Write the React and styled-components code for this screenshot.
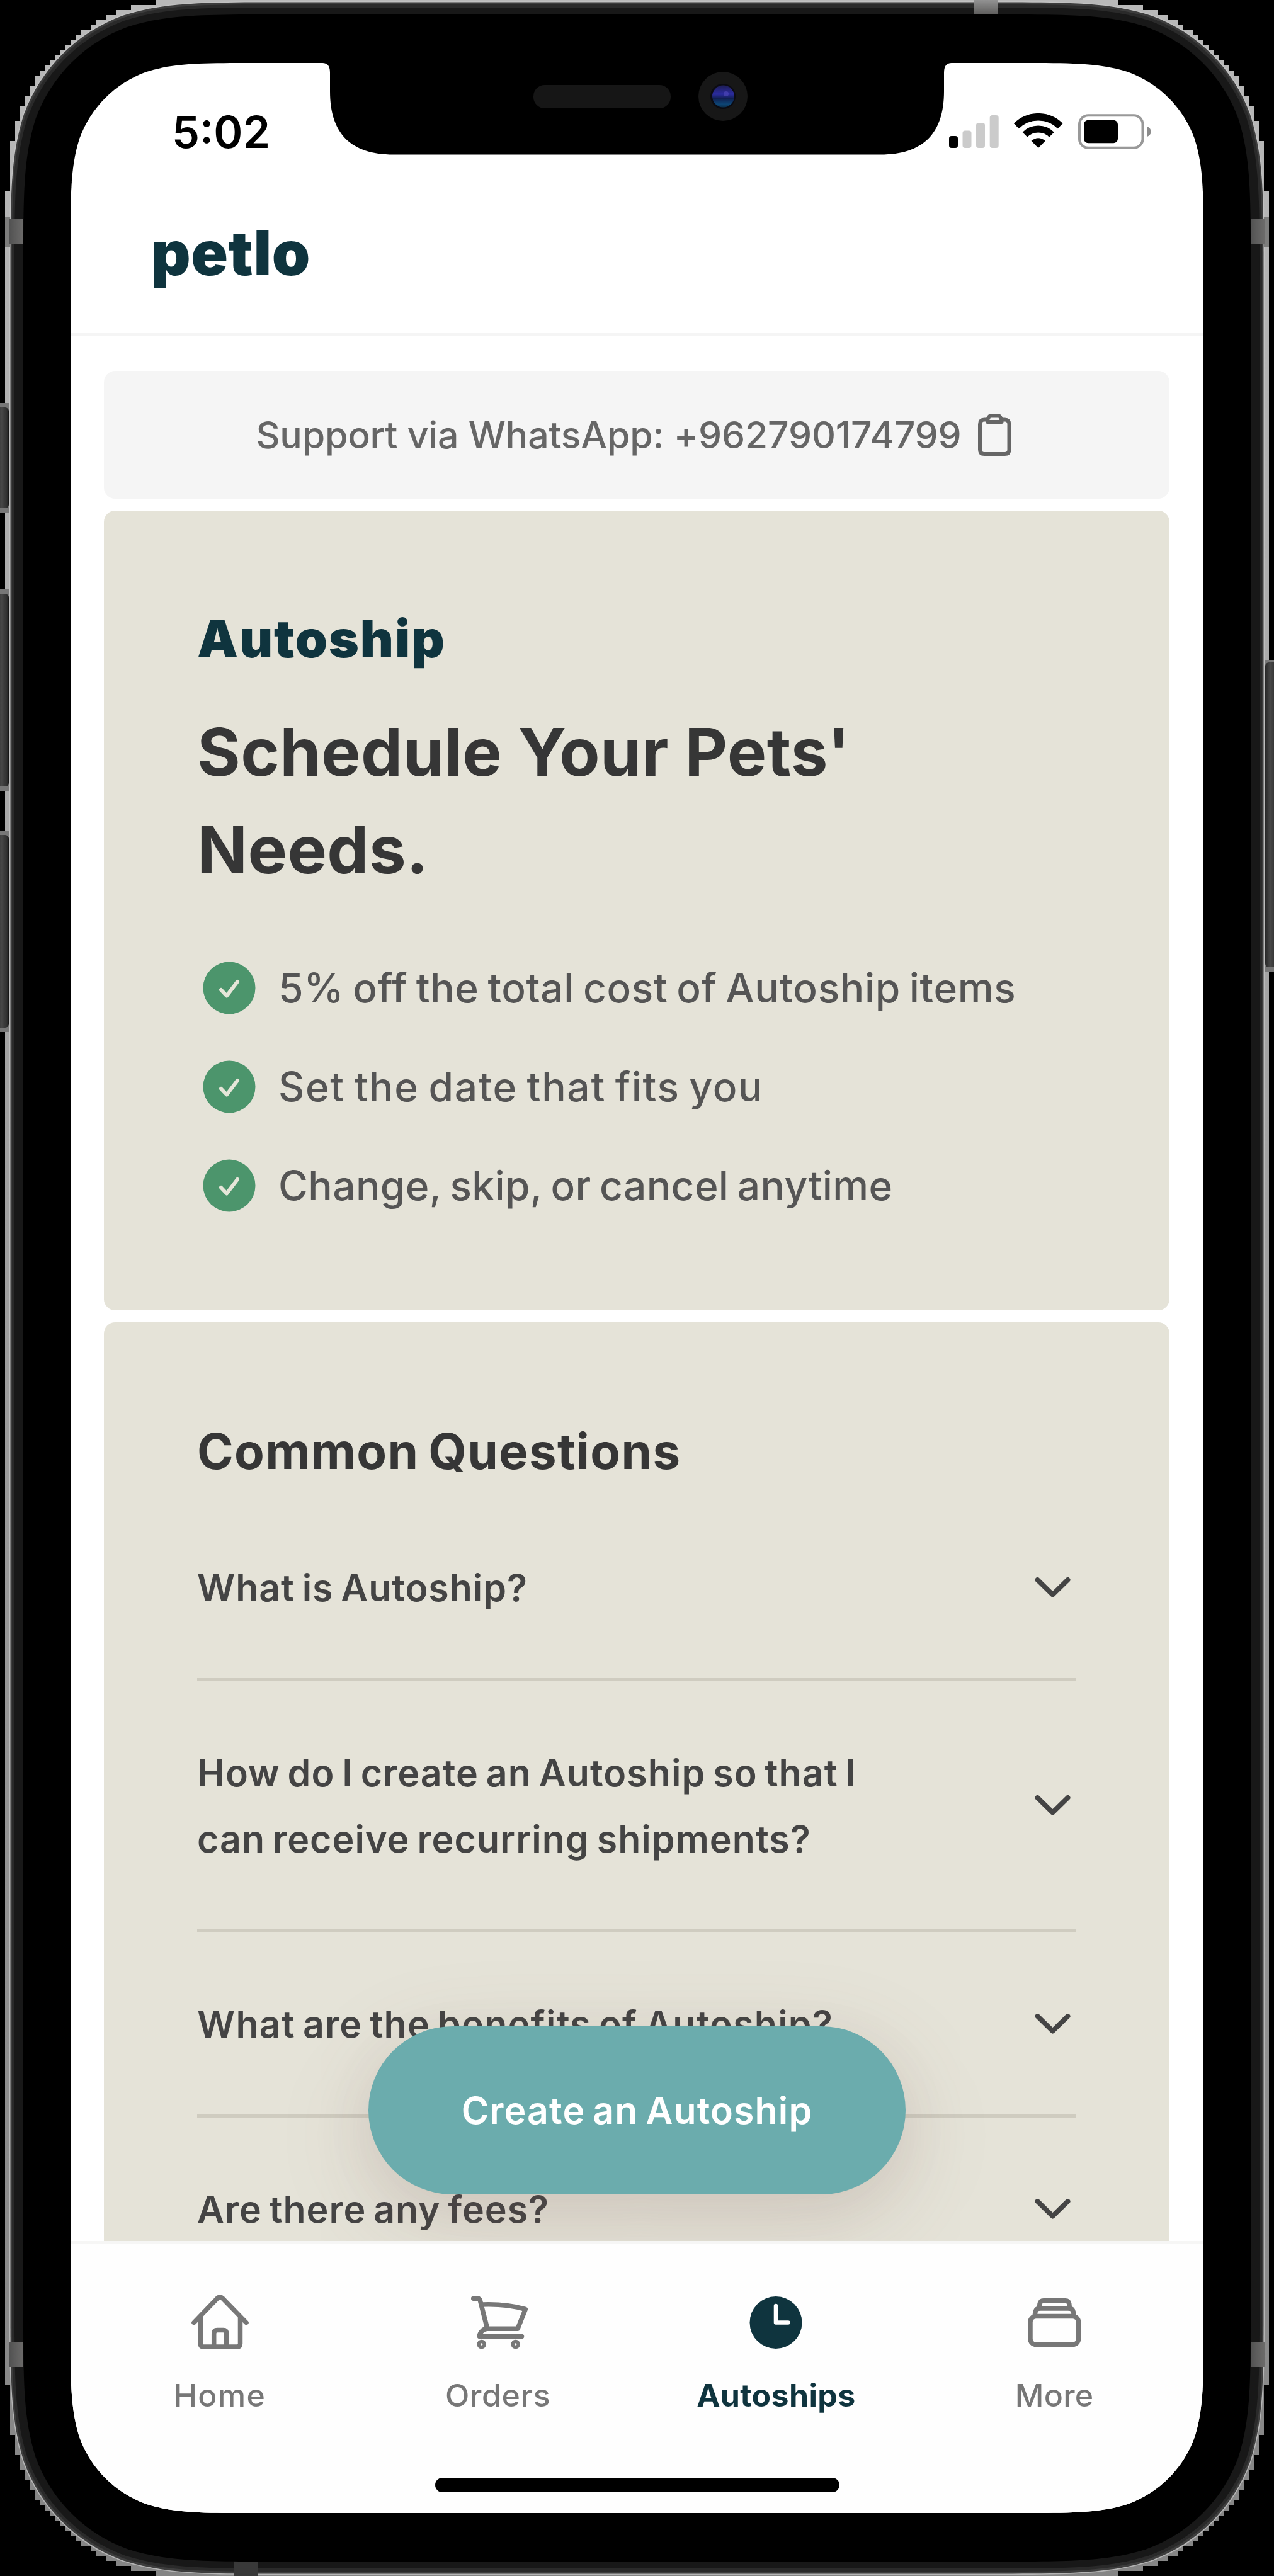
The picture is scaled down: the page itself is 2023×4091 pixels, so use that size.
import React from 'react';
import styled, { createGlobalStyle } from 'styled-components';

const GlobalStyle = createGlobalStyle`
  * { box-sizing: border-box; }
  html, body { margin: 0; padding: 0; background: #000; }
  body { font-family: Inter, "Liberation Sans", sans-serif; -webkit-font-smoothing: antialiased; }
  h1, h2, p, ul { margin: 0; padding: 0; }
  ul { list-style: none; }
  button { font-family: inherit; border: 0; cursor: pointer; }
`;

/* Continuous-curvature rounded rectangle, clockwise from the top edge. */
function squircle(x, y, w, h, r) {
  const a = 1.528665 * r, b = 1.08849 * r, c = 0.86841 * r;
  const d = 0.631494 * r, e = 0.074911 * r, f = 0.372824 * r, g = 0.16906 * r;
  const R = x + w, B = y + h;
  return [
    `M${x + a} ${y}H${R - a}`,
    `C${R - b} ${y} ${R - c} ${y} ${R - d} ${y + e}`,
    `C${R - f} ${y + g} ${R - g} ${y + f} ${R - e} ${y + d}`,
    `C${R} ${y + c} ${R} ${y + b} ${R} ${y + a}`,
    `V${B - a}`,
    `C${R} ${B - b} ${R} ${B - c} ${R - e} ${B - d}`,
    `C${R - g} ${B - f} ${R - f} ${B - g} ${R - d} ${B - e}`,
    `C${R - c} ${B} ${R - b} ${B} ${R - a} ${B}`,
    `H${x + a}`,
    `C${x + b} ${B} ${x + c} ${B} ${x + d} ${B - e}`,
    `C${x + f} ${B - g} ${x + g} ${B - f} ${x + e} ${B - d}`,
    `C${x} ${B - c} ${x} ${B - b} ${x} ${B - a}`,
    `V${y + a}`,
    `C${x} ${y + b} ${x} ${y + c} ${x + e} ${y + d}`,
    `C${x + g} ${y + f} ${x + f} ${y + g} ${x + d} ${y + e}`,
    `C${x + c} ${y} ${x + b} ${y} ${x + a} ${y}Z`,
  ].join('');
}

const W = 2023;
const H = 4091;

/* Stepped outline of the metal rim: corner points from the side to the top. */
const steps = [
  [8, 304], [16, 224], [24, 192], [32, 168], [40, 152], [48, 136], [56, 120], [64, 112],
  [72, 104], [80, 96], [88, 88], [96, 80], [104, 72], [112, 64], [120, 56], [128, 48],
  [144, 40], [152, 32], [168, 24], [184, 16], [208, 8], [248, 0],
];
const corner = steps.flatMap(([x, y], i) => (i ? [[x, steps[i - 1][1]], [x, y]] : [[x, y]]));
const rim = [
  ...corner,
  ...[...corner].reverse().map(([x, y]) => [W - x, y]),
  ...corner.map(([x, y]) => [W - x, H - y]),
  ...[...corner].reverse().map(([x, y]) => [x, H - y]),
].map((p) => p.join(',')).join(' ');

const Stage = styled.div`
  position: relative;
  width: ${W}px;
  height: ${H}px;
  padding: 100px 112px;
  background: #000;
  overflow: hidden;
`;

const Art = styled.svg`
  position: absolute;
  top: 0;
  left: 0;
  pointer-events: none;
`;

const Screen = styled.div`
  position: relative;
  width: 1799px;
  height: 3891px;
  display: flex;
  flex-direction: column;
  background: #fff;
  clip-path: path('${squircle(0, 0, 1799, 3891, 190)}');
`;

const StatusBar = styled.div`
  flex: none;
  height: 173px;
  padding: 80px 83px 0 161px;
  display: flex;
  align-items: flex-start;
  justify-content: space-between;
`;

const Clock = styled.span`
  font-size: 70px;
  font-weight: 600;
  line-height: 60px;
  color: #000;
`;

const Header = styled.header`
  flex: none;
  height: 261px;
  padding-left: 128px;
  display: flex;
  align-items: center;
  border-bottom: 5px solid #f5f5f5;
`;

const Brand = styled.span`
  font-size: 97px;
  font-weight: 900;
  line-height: 97px;
  letter-spacing: 0.6px;
  color: #0f343e;
`;

const Main = styled.main`
  position: relative;
  flex: none;
  height: 3025px;
  padding: 55px 54px 0 53px;
  display: flex;
  flex-direction: column;
  gap: 19px;
  overflow: hidden;
`;

const Support = styled.div`
  flex: none;
  height: 203px;
  padding-right: 10px;
  display: flex;
  align-items: center;
  justify-content: center;
  gap: 26px;
  border-radius: 18px;
  background: #f5f5f5;
  color: #666;
  font-size: 59px;
  font-weight: 500;
  letter-spacing: -0.2px;
`;

const Card = styled.section`
  flex: none;
  border-radius: 18px;
  background: #e5e3d8;
  padding: ${(p) => p.$pad};
  height: ${(p) => p.$height || 'auto'};
`;

const Logo = styled.p`
  font-size: 82px;
  font-weight: 900;
  line-height: 90px;
  letter-spacing: 1.8px;
  color: #0f343e;
`;

const Title = styled.h1`
  margin-top: 56px;
  font-size: 105px;
  font-weight: 700;
  line-height: 155px;
  letter-spacing: 0.4px;
  color: #363636;
  max-width: 1200px;
`;

const Perks = styled.ul`
  margin-top: 64px;
  padding-left: 9px;
`;

const Perk = styled.li`
  height: 157px;
  display: flex;
  align-items: center;
  gap: 36px;
  font-size: 64px;
  font-weight: 500;
  letter-spacing: ${(p) => p.$track}px;
  word-spacing: -4px;
  color: #555;
`;

const Subtitle = styled.h2`
  margin-bottom: 16px;
  font-size: 78px;
  font-weight: 700;
  line-height: 110px;
  letter-spacing: 1.35px;
  word-spacing: -5px;
  color: #363636;
`;

const Question = styled.div`
  display: flex;
  align-items: center;
  justify-content: space-between;
  padding: 93px 9px 91px 0;
  border-bottom: 5px solid #cfccc0;
`;

const QuestionText = styled.p`
  max-width: 1100px;
  font-size: 59px;
  font-weight: 600;
  line-height: 105px;
  letter-spacing: ${(p) => p.$track}px;
  word-spacing: -4px;
  color: #444;
`;

const CreateButton = styled.button`
  position: absolute;
  left: 473px;
  top: 2684px;
  width: 853px;
  height: 267px;
  border-radius: 134px;
  background: #6bacad;
  color: #fff;
  font-size: 59px;
  font-weight: 600;
  letter-spacing: 1.1px;
  word-spacing: -4px;
  box-shadow: 0 40px 150px rgba(120, 85, 75, 0.17), 0 20px 80px rgba(120, 90, 80, 0.07);
`;

const Nav = styled.nav`
  flex: 1;
  display: flex;
  flex-direction: column;
  align-items: center;
  border-top: 5px solid #f6f6f5;
  background: #fefefe;
`;

const Tabs = styled.div`
  width: 1767px;
  padding-top: 76px;
  display: grid;
  grid-template-columns: repeat(4, 1fr);
`;

const Tab = styled.div`
  display: flex;
  flex-direction: column;
  align-items: center;
  gap: 38px;
  color: ${(p) => (p.$active ? '#0f343e' : '#777')};
  font-size: 50px;
  font-weight: ${(p) => (p.$active ? 700 : 500)};
  line-height: 60px;
  letter-spacing: ${(p) => p.$track}px;
`;

const HomeIndicator = styled.div`
  width: 642px;
  height: 23px;
  margin: auto 0 33px;
  border-radius: 12px;
  background: #000;
`;

const Rim = () => (
  <Art width={W} height={H} viewBox={`0 0 ${W} ${H}`} aria-hidden="true">
    <defs>
      <linearGradient id="rim" x1="0" y1="0" x2="0" y2="1">
        <stop offset="0" stopColor="#b9b9b9" />
        <stop offset="0.35" stopColor="#a6a6a6" />
        <stop offset="1" stopColor="#858585" />
      </linearGradient>
      <linearGradient id="key" x1="0" y1="0" x2="1" y2="0">
        <stop offset="0" stopColor="#262626" />
        <stop offset="0.4" stopColor="#484848" />
        <stop offset="0.85" stopColor="#303030" />
        <stop offset="1" stopColor="#111" />
      </linearGradient>
      <linearGradient id="antenna" x1="0" y1="0" x2="1" y2="0">
        <stop offset="0" stopColor="#525252" />
        <stop offset="1" stopColor="#6c6b6a" />
      </linearGradient>
      <linearGradient id="antennaTop" x1="0" y1="0" x2="0" y2="1">
        <stop offset="0" stopColor="#929292" />
        <stop offset="1" stopColor="#5c5b5a" />
      </linearGradient>
    </defs>
    <polygon points={rim} fill="url(#rim)" shapeRendering="crispEdges" />
    <path d={squircle(15, 2, 1993, 4087, 284)} fill="#c4c4c4" opacity="0.75" />
    <path d={squircle(16.5, 3.5, 1990, 4084, 283)} fill="#3d3d3d" />
    <path d={squircle(19, 7, 1985, 4077, 281)} fill="#2a2a2a" />
    <path d={squircle(23, 12, 1977, 4067, 277)} fill="#181818" />
    <rect x="8" y="344" width="8" height="48" fill="#7d7d7c" />
    <rect x="2007" y="344" width="8" height="48" fill="#7d7d7c" />
    <rect x="15" y="348" width="22" height="39" fill="url(#antenna)" />
    <rect x="1986" y="348" width="22" height="39" fill="url(#antenna)" />
    <rect x="15" y="3720" width="22" height="39" fill="url(#antenna)" />
    <rect x="1986" y="3720" width="22" height="39" fill="url(#antenna)" />
    <rect x="1546" y="0" width="39" height="24" fill="url(#antennaTop)" />
    <rect x="371" y="4067" width="39" height="24" fill="#393939" />
    <path d={squircle(37, 23, 1949, 4045, 262)} fill="#000" />
    <g fill="url(#key)">
      {[[640, 174], [936, 320], [1319, 320]].map(([y, h]) => (
        <React.Fragment key={y}>
          <rect x="0" y={y} width="15" height={h} fill="#777" />
          <rect x="-6" y={y + 7} width="20" height={h - 14} rx="6" />
        </React.Fragment>
      ))}
      <rect x="2008" y="1048" width="15" height="496" fill="#777" />
      <rect x="2009" y="1052" width="20" height="484" rx="6" />
    </g>
  </Art>
);

const Notch = () => (
  <Art width={W} height="300" viewBox={`0 0 ${W} 300`} aria-hidden="true">
    <defs>
      <linearGradient id="lens" x1="0" y1="0" x2="0" y2="1">
        <stop offset="0" stopColor="#1d1d55" />
        <stop offset="0.4" stopColor="#2c2ca0" />
        <stop offset="0.6" stopColor="#101f50" />
        <stop offset="0.85" stopColor="#0d4575" />
        <stop offset="1" stopColor="#0b2f4c" />
      </linearGradient>
    </defs>
    <path
      d="M512 98V100Q524 100 524 115V145C524 212 557 245.500 625 245.500H1398C1466 245.500 1499 212 1499 145V115Q1499 100 1511 100V98Z"
      fill="#000"
    />
    <rect x="847" y="135" width="218" height="37" rx="18" fill="#161616" />
    <circle cx="1148" cy="153" r="39" fill="#171717" />
    <circle cx="1148" cy="153" r="20" fill="#0b0b12" />
    <circle cx="1148.500" cy="153" r="17.500" fill="url(#lens)" />
    <circle cx="1153" cy="149" r="4" fill="#5a50c4" opacity="0.5" />
  </Art>
);

const StatusIcons = () => (
  <svg width="321" height="60" viewBox="0 0 321 60" fill="none">
    <rect x="0" y="36" width="14" height="19" rx="4" fill="#000" />
    <g fill="#cbcbcb">
      <rect x="21.500" y="27.500" width="14" height="27.500" rx="4" />
      <rect x="43" y="15" width="14" height="40" rx="4" />
      <rect x="64.700" y="3" width="14" height="52" rx="4" />
    </g>
    <path d="M106.840 20.140A49.300 49.300 0 0 1 176.560 20.140" stroke="#000" strokeWidth="11.500" />
    <path d="M120.490 33.790A30 30 0 0 1 162.910 33.790" stroke="#000" strokeWidth="11" />
    <path d="M141.700 55L130.500 43.800Q141.700 34.500 152.900 43.800Z" fill="#000" />
    <rect x="207" y="3.300" width="100.500" height="51.500" rx="14" stroke="#999" strokeWidth="4" />
    <rect x="214" y="10.700" width="54" height="36.600" rx="7" fill="#000" />
    <path d="M314 20.500Q320.700 23.500 320.700 29T314 37.500Z" fill="#8c8c8c" />
  </svg>
);

const Clipboard = () => (
  <svg width="53" height="68" viewBox="0 0 53 68" fill="none" stroke="#666" strokeWidth="6" strokeLinejoin="round">
    <path d="M14 9.500H10Q3 9.500 3 17V57Q3 64 10 64H42.500Q49.500 64 49.500 57V17Q49.500 9.500 42.500 9.500H38.500" />
    <path d="M20 3.500H32.500Q35 3.500 36 7L37.500 9.500V13H15V9.500L16.500 7Q17.500 3.500 20 3.500Z" />
  </svg>
);

const Check = () => (
  <svg width="84" height="84" viewBox="0 0 84 84" fill="none">
    <circle cx="42" cy="42" r="41.500" fill="#4c956c" />
    <path d="M29 45L38 54.500L55 32" stroke="#e6e6d9" strokeWidth="6" strokeLinecap="round" strokeLinejoin="round" />
  </svg>
);

const Chevron = () => (
  <svg width="57" height="34" viewBox="0 0 57 34" fill="none">
    <path d="M4.500 4L28.500 27.500L52.500 4" stroke="#444" strokeWidth="8" strokeLinecap="round" strokeLinejoin="round" />
  </svg>
);

const TabIcon = ({ children }) => (
  <svg width="96" height="96" viewBox="0 0 96 96" fill="none" stroke="#777" strokeWidth="7.500" strokeLinecap="round" strokeLinejoin="round">
    {children}
  </svg>
);

const HomeIcon = () => (
  <TabIcon>
    <path d="M7 48.500L43.800 10.300Q48.300 6 52.800 10.300L90 48.500" />
    <path d="M17.300 40V82Q17.300 87 22.300 87H75.500Q80.500 87 80.500 82V40" />
    <path d="M38.700 86V66Q38.700 60.500 44 60.500H53.500Q58.700 60.500 58.700 66V86" strokeLinecap="butt" />
  </TabIcon>
);

const CartIcon = () => (
  <TabIcon>
    <path d="M8.700 10.200H15.500Q18.500 10.200 19.500 14L30.500 57" />
    <path d="M22 20Q60 18.500 91.300 27.300L79 58.300H30.500Q22 59 18.500 68V70.500H85.500" />
    <circle cx="21.700" cy="83" r="4.500" strokeWidth="5.500" />
    <circle cx="75.700" cy="83" r="4.500" strokeWidth="5.500" />
  </TabIcon>
);

const ClockIcon = () => (
  <TabIcon>
    <circle cx="48" cy="48.500" r="41.500" fill="#0f343e" stroke="none" />
    <path d="M48 22V48.500H67.500" stroke="#fff" strokeWidth="6.500" />
  </TabIcon>
);

const MoreIcon = () => (
  <TabIcon>
    <rect x="10" y="38.500" width="76.500" height="45" rx="9" />
    <path d="M17 38L18 32Q19 26 25 26H71.500Q77.500 26 78.500 32L79.500 38" />
    <path d="M24 26L25 19Q26 13.700 31 13.700H65.500Q71 13.700 71.800 19L72.500 26" />
  </TabIcon>
);

const perks = [
  ['5% off the total cost of Autoship items', 0.68],
  ['Set the date that fits you', 1.7],
  ['Change, skip, or cancel anytime', 0.38],
];

const questions = [
  ['What is Autoship?', 0.96],
  ['How do I create an Autoship so that I can receive recurring shipments?', 1.05],
  ['What are the benefits of Autoship?', 1.2],
  ['Are there any fees?', 0.95],
];

const tabs = [
  ['Home', HomeIcon, 1.3, false],
  ['Orders', CartIcon, 0.7, false],
  ['Autoships', ClockIcon, 0.36, true],
  ['More', MoreIcon, 0.26, false],
];

export default function App() {
  return (
    <Stage>
      <GlobalStyle />
      <Rim />
      <Screen>
        <StatusBar>
          <Clock>5:02</Clock>
          <StatusIcons />
        </StatusBar>
        <Header>
          <Brand>petlo</Brand>
        </Header>
        <Main>
          <Support>
            <span>Support via WhatsApp: +962790174799</span>
            <Clipboard />
          </Support>
          <Card $height="1270px" $pad="159px 148px 0">
            <Logo>Autoship</Logo>
            <Title>Schedule Your Pets' Needs.</Title>
            <Perks>
              {perks.map(([text, track]) => (
                <Perk key={text} $track={track}>
                  <Check />
                  <span>{text}</span>
                </Perk>
              ))}
            </Perks>
          </Card>
          <Card $pad="150px 148px 0">
            <Subtitle>Common Questions</Subtitle>
            {questions.map(([text, track]) => (
              <Question key={text}>
                <QuestionText $track={track}>{text}</QuestionText>
                <Chevron />
              </Question>
            ))}
          </Card>
          <CreateButton>Create an Autoship</CreateButton>
        </Main>
        <Nav>
          <Tabs>
            {tabs.map(([label, Icon, track, active]) => (
              <Tab key={label} $track={track} $active={active}>
                <Icon />
                <span>{label}</span>
              </Tab>
            ))}
          </Tabs>
          <HomeIndicator />
        </Nav>
      </Screen>
      <Notch />
    </Stage>
  );
}
